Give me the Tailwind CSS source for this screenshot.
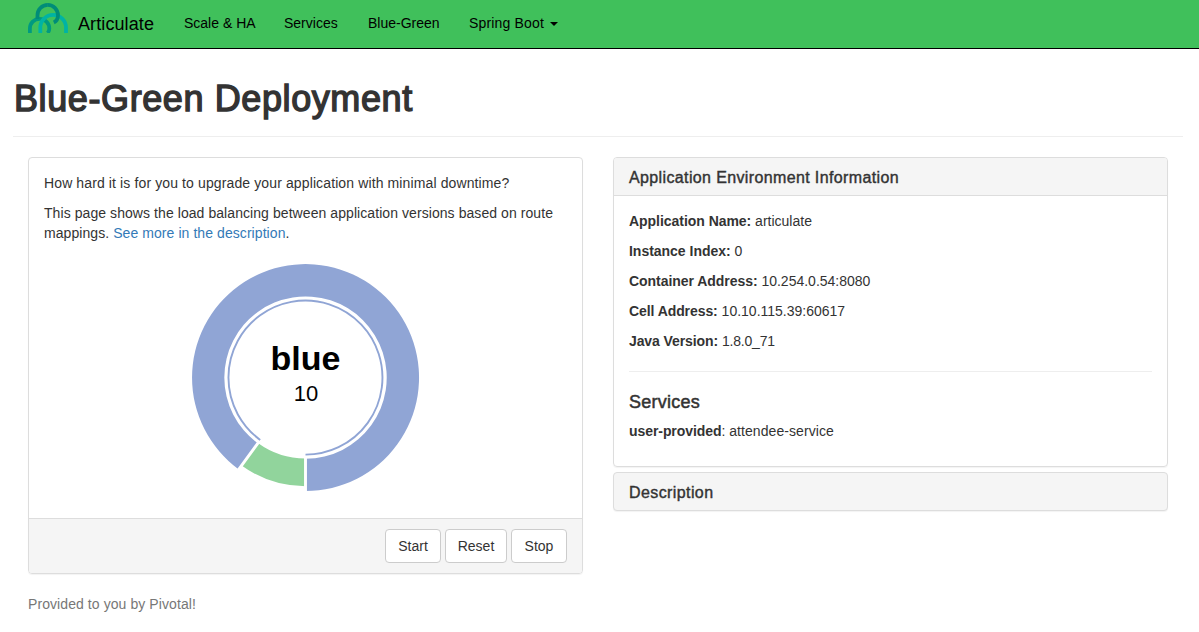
<!DOCTYPE html>
<html lang="en">
<head>
<meta charset="utf-8">
<title>Articulate</title>
<script src="https://cdn.jsdelivr.net/npm/@tailwindcss/browser@4"></script>
</head>
<body class="bg-white font-['Liberation_Sans',sans-serif] text-sm leading-5 text-[#333]">
<nav class="flex h-[49px] items-start border-b border-black bg-[#40c05b] pl-7 text-black">
  <svg class="mt-[3px] h-[30px] w-10 shrink-0" viewBox="0 0 40 30" fill="none" stroke-width="3.800">
    <path d="M1.900 30V25.500A9.700 9.700 0 0 1 21.300 25.500C21.300 27.500 20.500 29 19.500 30" stroke="#009a80"/>
    <path d="M9.500 16V12.500A10.300 10.300 0 0 1 19.800 1.900" stroke="#008c78"/>
    <path d="M12.300 30V24.800A12.850 12.850 0 0 1 38 24.800V30" stroke="#00b3a4"/>
    <path d="M19.600 1.900A10.300 10.500 0 0 1 30 12.300C30 15.800 28.600 18.200 25.800 19.500" stroke="#008c78"/>
  </svg>
  <a class="ml-2.5 mt-[14px] w-[76px] whitespace-nowrap text-lg leading-5 tracking-[0.1px]">Articulate</a>
  <div class="ml-[30px] mt-[13px] flex gap-[30px] whitespace-nowrap">
    <a class="w-[70px]">Scale &amp; HA</a>
    <a class="w-[54px]">Services</a>
    <a class="w-[71px]">Blue-Green</a>
    <a class="flex items-center tracking-[0.17px]">Spring Boot <span class="ml-1.5 mt-px border-x-4 border-t-4 border-x-transparent border-t-black"></span></a>
  </div>
</nav>
<main class="px-[13px]">
  <header class="mr-[3px] mt-[30px] border-b border-[#eee] pb-[17px]">
    <h1 class="pl-px text-4xl leading-10 tracking-[0.6px] [-webkit-text-stroke:1.400px_#333]">Blue-Green Deployment</h1>
  </header>
  <div class="mt-5 flex items-start gap-[30px] px-[15px]">
    <section class="flex h-[417px] w-[555px] flex-col overflow-hidden rounded border border-[#ddd] shadow-[0_1px_1px_rgba(0,0,0,0.05)]">
      <div class="flex-1 px-[15px] pt-[15px]">
        <p class="tracking-[0.118px]">How hard it is for you to upgrade your application with minimal downtime?</p>
        <p class="mt-2.5 tracking-[0.07px]">This page shows the load balancing between application versions based on route<br>mappings. <a class="text-[#337ab7]">See more in the description</a>.</p>
        <svg class="mx-auto mt-[15px] block h-[240px] w-[240px]" viewBox="-119.500 -119.600 240 240">
          <path d="M0 113.500A113.500 113.500 0 1 0 -66.700 91.800L-47.700 65.700A81.200 81.200 0 1 1 0 81.200Z" fill="#90a5d5"/>
          <path d="M0 108.700A108.700 108.700 0 0 1 -63.900 87.900L-47.600 65.500A81 81 0 0 0 0 81Z" fill="#91d49c"/>
          <path d="M0 80V116M-47 64.700L-68.200 93.800" stroke="#fff" stroke-width="2.900"/>
          <path d="M0 77A77 77 0 1 0 -45.300 62.300" stroke="#90a5d5" stroke-width="1.900" fill="none"/>
          <text x="0" y="-7.600" text-anchor="middle" class="fill-black text-[34px] font-bold">blue</text>
          <text x="0.500" y="23" text-anchor="middle" class="fill-black text-[22px]">10</text>
        </svg>
      </div>
      <div class="flex h-[55px] items-start justify-end gap-1 border-t border-[#ddd] bg-[#f5f5f5] px-[15px] pt-2.5 whitespace-nowrap">
        <button class="h-[34px] w-14 rounded border border-[#ccc] bg-white">Start</button>
        <button class="h-[34px] w-[62px] rounded border border-[#ccc] bg-white">Reset</button>
        <button class="h-[34px] w-14 rounded border border-[#ccc] bg-white">Stop</button>
      </div>
    </section>
    <div class="flex w-[555px] flex-col gap-[5px]">
      <section class="h-[310px] overflow-hidden rounded border border-[#ddd] shadow-[0_1px_1px_rgba(0,0,0,0.05)]">
        <h2 class="h-[38px] border-b border-[#ddd] bg-[#f5f5f5] px-[15px] pt-[10px] text-base leading-5 tracking-[0.37px] [-webkit-text-stroke:0.400px_#333]">Application Environment Information</h2>
        <div class="flex flex-col gap-2.5 px-[15px] pt-[15px]">
          <p><b class="tracking-[-0.04px]">Application Name:</b> articulate</p>
          <p><b class="tracking-[-0.02px]">Instance Index:</b> 0</p>
          <p><b class="tracking-[-0.05px]">Container Address:</b> 10.254.0.54:8080</p>
          <p><b class="tracking-[-0.08px]">Cell Address:</b> 10.10.115.39:60617</p>
          <p><b class="tracking-[-0.1px]">Java Version:</b> <span class="tracking-[-0.18px]">1.8.0_71</span></p>
        </div>
        <hr class="mx-[15px] mt-5 border-[#eee]">
        <h3 class="px-[15px] pt-5 text-lg leading-5 tracking-[0.25px] [-webkit-text-stroke:0.500px_#333]">Services</h3>
        <p class="px-[15px] pt-[9px]"><b class="tracking-[-0.07px]">user-provided</b>: <span class="tracking-[0.07px]">attendee-service</span></p>
      </section>
      <section class="h-[39px] rounded border border-[#ddd] bg-[#f5f5f5] px-[15px] pt-[10px] shadow-[0_1px_1px_rgba(0,0,0,0.05)]">
        <h2 class="text-base leading-5 tracking-[0.4px] [-webkit-text-stroke:0.400px_#333]">Description</h2>
      </section>
    </div>
  </div>
  <footer class="mt-5 px-[15px] tracking-[0.08px] text-[#777]">Provided to you by Pivotal!</footer>
</main>
</body>
</html>
